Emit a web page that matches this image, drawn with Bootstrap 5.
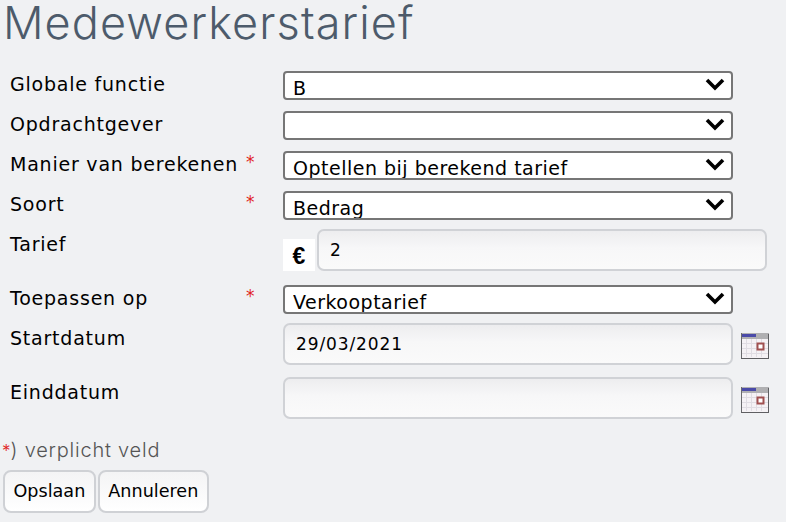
<!DOCTYPE html>
<html lang="nl">
<head>
<meta charset="utf-8">
<title>Medewerkerstarief</title>
<link href="https://cdn.jsdelivr.net/npm/bootstrap@5.3.0/dist/css/bootstrap.min.css" rel="stylesheet">
<style>
html,body{background:#f0f1f3;height:522px;overflow:hidden}
body{font-family:"DejaVu Sans",Verdana,sans-serif;font-size:19px;color:#000}
.sheet{padding:0 0 0 3px}
.page-title{font-family:Inter,"Open Sans",sans-serif;font-weight:300;font-size:45px;line-height:46px;color:#4d5b6b;margin:0;height:71px;letter-spacing:1.1px;padding-top:0}
.frow{display:flex;align-items:flex-start}
.flabel{width:280px;flex:none;padding:1px 0 0 7px;display:flex;line-height:24px;margin:0;letter-spacing:.78px}
.flabel .lbl{width:236px;white-space:nowrap}
.lowlabel{padding-top:3px}
.req{color:#e0241f;font-size:17px;line-height:20px;letter-spacing:0}
.rs{height:40px}.rt{height:56px}.rs2{height:38px}.rd{height:54px}
.sel.form-select{width:450px;height:29px;flex:none;border:2px solid #767676;border-radius:4px;padding:3px 30px 0 8px;font-size:19px;letter-spacing:.5px;line-height:24px;color:#000;background-color:#fff;
background-image:url("data:image/svg+xml,%3Csvg xmlns='http://www.w3.org/2000/svg' viewBox='0 0 20 14'%3E%3Cpath d='M2 3l8 8 8-8' fill='none' stroke='%23000' stroke-width='3.6'/%3E%3C/svg%3E");
background-size:20px 14px;background-position:right 6px top 4px;box-shadow:none}
.txt.form-control{height:42px;border:2px solid #d0d2d6;border-radius:7px;padding:0 11px;font-size:17px;letter-spacing:.9px;color:#000;background:linear-gradient(#ededef,#f7f7f8 45%,#fafafa);box-shadow:none;width:450px;flex:none}
.euro{width:32px;height:32px;flex:none;background:#fff;font-family:"Liberation Sans",Arial,sans-serif;font-weight:700;font-size:23px;line-height:35px;text-align:center;margin-top:10px}
.tinp{margin-left:2px}
.cal{margin:10px 0 0 8px;flex:none}
.note{font-family:Inter,"Open Sans",sans-serif;font-size:20px;letter-spacing:.78px;line-height:24px;color:#555;margin:7px 0 7px -1px;font-weight:300}
.note .req{font-size:17px;line-height:24px}
.act.btn{height:43px;border:2px solid #cfd1d5;border-radius:8px;color:#000;font-size:17.6px;padding:0 8.5px;background:linear-gradient(#f4f4f5,#fff);margin-right:2px}
</style>
</head>
<body>
<div class="sheet">
<h1 class="page-title">Medewerkerstarief</h1>
<form>
<div class="frow rs"><label class="flabel"><span class="lbl">Globale functie</span></label><select class="form-select sel"><option>B</option></select></div>
<div class="frow rs"><label class="flabel"><span class="lbl">Opdrachtgever</span></label><select class="form-select sel"><option></option></select></div>
<div class="frow rs"><label class="flabel"><span class="lbl">Manier van berekenen</span><span class="req">*</span></label><select class="form-select sel"><option>Optellen bij berekend tarief</option></select></div>
<div class="frow rs2"><label class="flabel"><span class="lbl">Soort</span><span class="req">*</span></label><select class="form-select sel"><option>Bedrag</option></select></div>
<div class="frow rt"><label class="flabel lowlabel"><span class="lbl">Tarief</span></label><span class="euro">€</span><input class="form-control txt tinp" value="2"></div>
<div class="frow rs2"><label class="flabel"><span class="lbl">Toepassen op</span><span class="req">*</span></label><select class="form-select sel"><option>Verkooptarief</option></select></div>
<div class="frow rd"><label class="flabel lowlabel"><span class="lbl">Startdatum</span></label><input class="form-control txt" value="29/03/2021">
<svg class="cal" width="28" height="26" viewBox="0 0 28 26"><rect width="28" height="26" fill="#f5f2f5"/><rect x="0" y="0" width="28" height="6" fill="#b0b0b2"/><rect x="1" y="1" width="14" height="3" fill="#4a4aa8"/><path d="M5.5 6v18M10.5 6v18M15.5 6v18M20.5 6v18M0 10.5h28M0 15.5h28M0 20.5h28" stroke="#e0dde3"/><rect x="16.5" y="10.5" width="6" height="6" fill="#fff" stroke="#a05050" stroke-width="2"/><path d="M.5 0V25.5H28" fill="none" stroke="#6a6a6d"/><path d="M0 25.5H27.5V1" fill="none" stroke="#5f5f62"/></svg></div>
<div class="frow rd"><label class="flabel lowlabel"><span class="lbl">Einddatum</span></label><input class="form-control txt" value="">
<svg class="cal" width="28" height="26" viewBox="0 0 28 26"><rect width="28" height="26" fill="#f5f2f5"/><rect x="0" y="0" width="28" height="6" fill="#b0b0b2"/><rect x="1" y="1" width="14" height="3" fill="#4a4aa8"/><path d="M5.5 6v18M10.5 6v18M15.5 6v18M20.5 6v18M0 10.5h28M0 15.5h28M0 20.5h28" stroke="#e0dde3"/><rect x="16.5" y="10.5" width="6" height="6" fill="#fff" stroke="#a05050" stroke-width="2"/><path d="M.5 0V25.5H28" fill="none" stroke="#6a6a6d"/><path d="M0 25.5H27.5V1" fill="none" stroke="#5f5f62"/></svg></div>
<p class="note"><span class="req">*</span>) verplicht veld</p>
<div class="d-flex"><button type="button" class="btn act">Opslaan</button><button type="button" class="btn act">Annuleren</button></div>
</form>
</div>
<script src="https://cdn.jsdelivr.net/npm/bootstrap@5.3.0/dist/js/bootstrap.bundle.min.js"></script>
</body>
</html>
